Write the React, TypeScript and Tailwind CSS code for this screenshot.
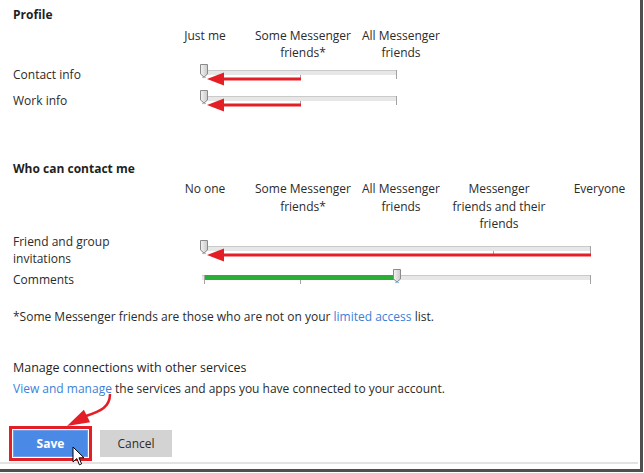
import React from "react";

const RED = "#e41e26";

function Thumb({ className }: { className: string }) {
  return (
    <svg className={"absolute " + className} width="10" height="16" viewBox="0 0 10 16">
      <defs>
        <linearGradient id="tg" x1="0" y1="0" x2="1" y2="0">
          <stop offset="0" stopColor="#f4f4f4" />
          <stop offset="1" stopColor="#c9c9c9" />
        </linearGradient>
      </defs>
      <path d="M1.5 1.5 H8.5 V11 L5 14 L1.5 11 Z" fill="url(#tg)" stroke="#8a8a8a" strokeWidth="1" />
      <path d="M3 14.5 H7" stroke="#9cc3e6" strokeWidth="1.2" />
    </svg>
  );
}

function LeftArrow({ className, w }: { className: string; w: number }) {
  return (
    <svg className={"absolute " + className} width={w} height="14" viewBox={`0 0 ${w} 14`}>
      <rect x="14" y="5.5" width={w - 14} height="3" fill={RED} />
      <polygon points="0,7 17,0.5 17,13.5" fill={RED} />
    </svg>
  );
}

function Tick({ className }: { className: string }) {
  return <div className={"absolute w-px bg-[#a3a3a3] " + className} />;
}

const labelGrid = "grid grid-cols-[143px_98px_98px_98px_98px_103px] text-center";

export default function App() {
  return (
    <div className="relative w-[644px] h-[473px] bg-white overflow-hidden font-['Open_Sans',sans-serif] text-[12px] leading-[17px] text-[#2b2b2b]">
      <div className="w-[643px] h-[472px] border-r-[3px] border-b-[3px] border-[#4f4f4f] flex flex-col">
        <div className="pl-[13px] pt-[6px] flex flex-col">
          {/* Profile */}
          <div className="font-bold text-[#1f1f1f]">Profile</div>
          <div className={labelGrid + " mt-[4px]"}>
            <div />
            <div>Just me</div>
            <div>Some Messenger<br />friends*</div>
            <div>All Messenger<br />friends</div>
          </div>
          <div className="flex items-center h-[26px]">
            <div className="w-[189px]">Contact info</div>
            <div className="relative w-[195px] h-[16px]">
              <div className="absolute left-0 right-0 top-[4px] h-[5px] bg-[#e7e7e7] border-t border-[#cacaca]" />
              <Tick className="left-[98px] top-[9px] h-[4px]" />
              <Tick className="left-[194px] top-[4px] h-[9px]" />
              <Thumb className="left-[-3px] top-[-3px]" />
              <LeftArrow className="left-[5px] top-[6px]" w={94} />
            </div>
          </div>
          <div className="flex items-center h-[26px]">
            <div className="w-[189px]">Work info</div>
            <div className="relative w-[195px] h-[16px]">
              <div className="absolute left-0 right-0 top-[4px] h-[5px] bg-[#e7e7e7] border-t border-[#cacaca]" />
              <Tick className="left-[98px] top-[9px] h-[4px]" />
              <Tick className="left-[194px] top-[4px] h-[9px]" />
              <Thumb className="left-[-3px] top-[-3px]" />
              <LeftArrow className="left-[5px] top-[6px]" w={94} />
            </div>
          </div>

          {/* Who can contact me */}
          <div className="font-bold text-[#1f1f1f] mt-[47px]">Who can contact me</div>
          <div className={labelGrid + " mt-[3px] leading-[17.5px]"}>
            <div />
            <div>No one</div>
            <div>Some Messenger<br />friends*</div>
            <div>All Messenger<br />friends</div>
            <div>Messenger<br />friends and their<br />friends</div>
            <div>Everyone</div>
          </div>
          <div className="flex items-center">
            <div className="w-[189px]">Friend and group<br />invitations</div>
            <div className="relative w-[389px] h-[16px]">
              <div className="absolute left-0 right-0 top-[4px] h-[5px] bg-[#e7e7e7] border-t border-[#cacaca]" />
              <Tick className="left-[291px] top-[9px] h-[4px]" />
              <Tick className="left-[388px] top-[4px] h-[9px]" />
              <Thumb className="left-[-3px] top-[-3px]" />
              <LeftArrow className="left-[5px] top-[6px]" w={384} />
            </div>
          </div>
          <div className="flex items-center mt-[4px]">
            <div className="w-[189px]">Comments</div>
            <div className="relative w-[389px] h-[16px]">
              <div className="absolute left-0 right-0 top-[4px] h-[5px] bg-[#e7e7e7] border-t border-[#cacaca]" />
              <div className="absolute left-[2px] w-[193px] top-[4px] h-[5px] bg-[#2aae35]" />
              <Tick className="left-[2px] top-[4px] h-[9px]" />
              <Tick className="left-[98px] top-[9px] h-[4px]" />
              <Tick className="left-[388px] top-[4px] h-[9px]" />
              <Thumb className="left-[190px] top-[-3px]" />
            </div>
          </div>

          <div className="mt-[20px]">
            *Some Messenger friends are those who are not on your{" "}
            <span className="text-[#3b7fd9]">limited access</span> list.
          </div>

          <div className="mt-[34px] text-[12.5px] text-[#1f1f1f]">Manage connections with other services</div>
          <div className="mt-[4px]">
            <span className="text-[#3b7fd9]">View and manage</span> the services and apps you have connected to your account.
          </div>

          <div className="flex gap-[12px] mt-[33px]">
            <button className="w-[75px] h-[27px] bg-[#4a8ae6] border border-[#6aa0ec] text-white font-bold outline-[3px] outline-solid outline-offset-[1px] outline-[#e41e26]">
              Save
            </button>
            <button className="w-[72px] h-[27px] bg-[#d3d3d3] text-[#2b2b2b]">Cancel</button>
          </div>
        </div>
        <div className="mt-[5px] h-[2px] bg-[#e3e3e3] w-[638px]" />
      </div>

      {/* curved annotation arrow */}
      <svg className="absolute left-[55px] top-[389px]" width="60" height="42" viewBox="0 0 60 42">
        <path d="M55 5 C 55 18, 46 22, 31 27" fill="none" stroke={RED} strokeWidth="2.5" />
        <polygon points="12,37 35.1,33.3 28.9,20.7" fill={RED} />
      </svg>

      {/* mouse cursor */}
      <svg className="absolute left-[72px] top-[446px]" width="14" height="22" viewBox="0 0 14 22">
        <path d="M1 1 L1 16 L4.8 12.6 L7.4 18.8 L9.6 17.8 L7 11.8 L12 11.8 Z" fill="white" stroke="black" strokeWidth="1" strokeLinejoin="round" />
      </svg>
    </div>
  );
}
